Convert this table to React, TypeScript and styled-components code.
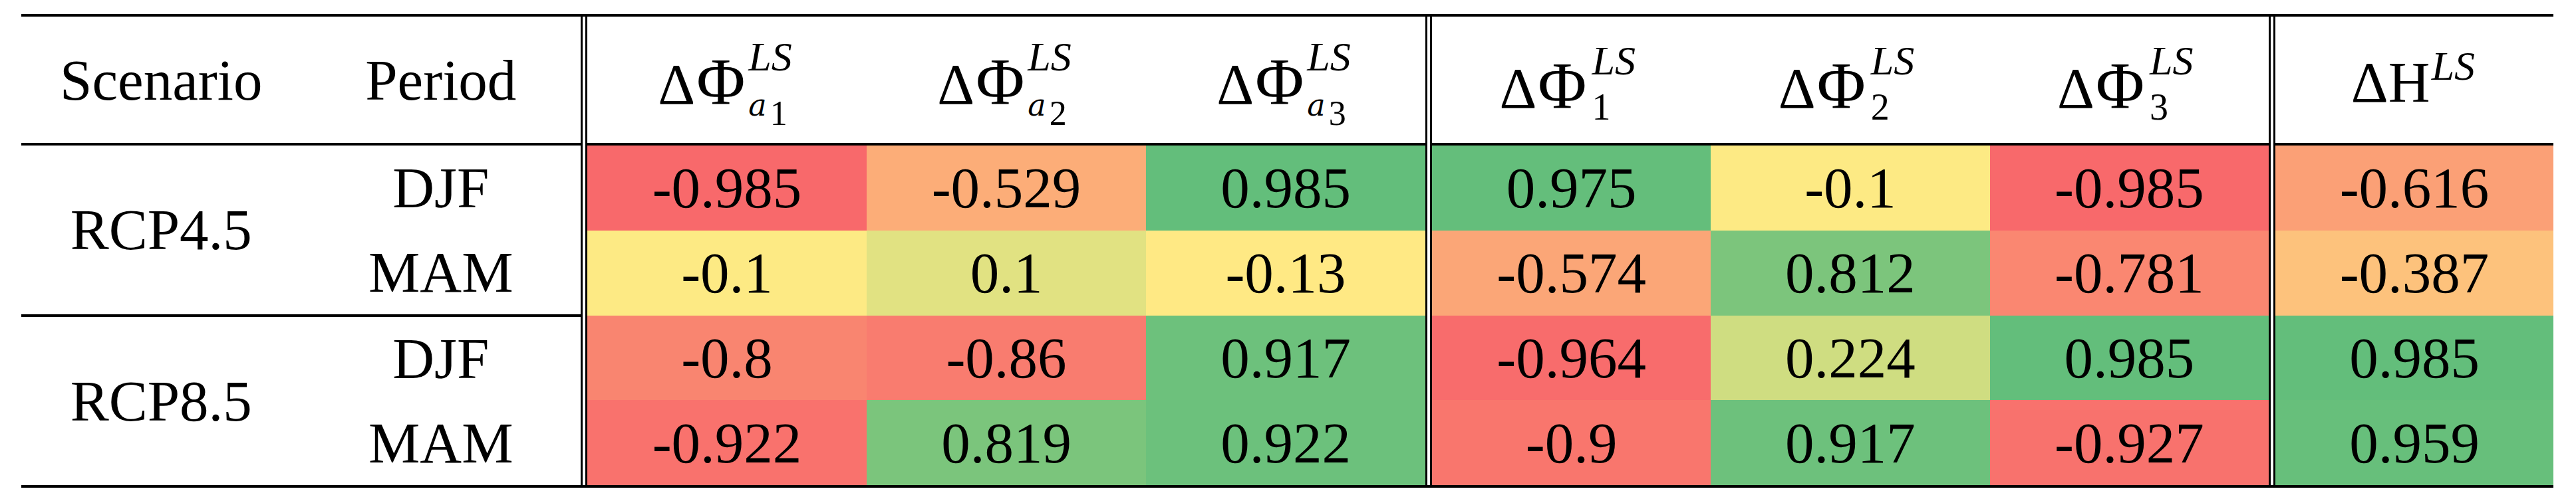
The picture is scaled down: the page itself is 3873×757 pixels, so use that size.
import React from "react";
import styled, { createGlobalStyle } from "styled-components";

const GlobalStyle = createGlobalStyle`
  html, body {
    margin: 0;
    padding: 0;
    background: #fff;
  }
  body {
    font-family: "Liberation Serif", "Times New Roman", serif;
    color: #000;
  }
`;

const Page = styled.div`
  padding: 21px 0 0 32px;
`;

const Table = styled.div`
  display: inline-flex;
  border-top: 4px solid #000;
  border-bottom: 4px solid #000;
  font-size: 87px;
  line-height: 1;
`;

const Section = styled.div<{ $width: number }>`
  display: flex;
  flex-direction: column;
  width: ${(p) => p.$width}px;
`;

const HeadRow = styled.div<{ $cols: number }>`
  display: grid;
  grid-template-columns: repeat(${(p) => p.$cols}, 1fr);
  height: 190px;
`;

const HeadCell = styled.div`
  display: flex;
  align-items: center;
  justify-content: center;
  white-space: nowrap;
`;

const MathCell = styled.div<{ $pad: number }>`
  display: flex;
  align-items: flex-start;
  justify-content: center;
  box-sizing: border-box;
  padding-top: ${(p) => p.$pad}px;
  white-space: nowrap;
`;

const Rule = styled.div`
  height: 4px;
  background: #000;
`;

const Divider = styled.div`
  box-sizing: border-box;
  width: 10px;
  border-left: 3px solid #000;
  border-right: 3px solid #000;
`;

const ScenarioBlock = styled.div`
  flex: 1;
  display: grid;
  grid-template-columns: 1fr 1fr;
  grid-template-rows: 1fr 1fr;
`;

const ScenarioCell = styled.div`
  grid-row: span 2;
  display: flex;
  align-items: center;
  justify-content: center;
`;

const PeriodCell = styled.div`
  display: flex;
  align-items: center;
  justify-content: center;
`;

const DataBody = styled.div<{ $cols: number }>`
  display: grid;
  grid-template-columns: repeat(${(p) => p.$cols}, 1fr);
  grid-template-rows: repeat(4, 1fr);
  height: 511px;
`;

const ValueCell = styled.div<{ $bg: string }>`
  display: flex;
  align-items: center;
  justify-content: center;
  background: ${(p) => p.$bg};
`;

const MathLine = styled.span<{ $shift: number }>`
  display: block;
  white-space: nowrap;
  line-height: 1;
  margin-right: ${(p) => p.$shift}px;
`;

// cambria's phi is taller and wider than the serif one
const BigGlyph = styled.span`
  font-size: 100px;
  margin-left: 2px;
`;

const Scripts = styled.span<{ $raise: number; $space: number }>`
  display: inline-flex;
  flex-direction: column;
  align-items: flex-start;
  vertical-align: ${(p) => p.$raise}px;
  margin-left: ${(p) => p.$space}px;
`;

const Sup = styled.span`
  display: block;
  font-size: 62px;
  font-style: italic;
  line-height: 1;
`;

const Sub = styled.span<{ $gap: number; $size: number }>`
  display: block;
  margin-top: ${(p) => p.$gap}px;
  font-size: ${(p) => p.$size}px;
  line-height: 1;
`;

const Var = styled.span`
  font-family: "DejaVu Serif", "Liberation Serif", serif;
  font-size: 46px;
  font-style: italic;
`;

const Lower = styled.span`
  vertical-align: -14px;
  margin-left: 5px;
`;

type Row = { scenario: string; period: string; values: number[] };

const rows: Row[] = [
  { scenario: "RCP4.5", period: "DJF", values: [-0.985, -0.529, 0.985, 0.975, -0.1, -0.985, -0.616] },
  { scenario: "RCP4.5", period: "MAM", values: [-0.1, 0.1, -0.13, -0.574, 0.812, -0.781, -0.387] },
  { scenario: "RCP8.5", period: "DJF", values: [-0.8, -0.86, 0.917, -0.964, 0.224, 0.985, 0.985] },
  { scenario: "RCP8.5", period: "MAM", values: [-0.922, 0.819, 0.922, -0.9, 0.917, -0.927, 0.959] },
];

// excel style red - yellow - green scale, midpoint at the 50th percentile
const RED = [248, 105, 107];
const YELLOW = [255, 235, 132];
const GREEN = [99, 190, 123];

const sorted = rows.flatMap((r) => r.values).sort((a, b) => a - b);
const lo = sorted[0];
const hi = sorted[sorted.length - 1];
const half = sorted.length / 2;
const mid = sorted.length % 2 ? sorted[Math.floor(half)] : (sorted[half - 1] + sorted[half]) / 2;

function mix(a: number[], b: number[], t: number) {
  const c = a.map((v, i) => Math.round(v + (b[i] - v) * t));
  return `rgb(${c[0]}, ${c[1]}, ${c[2]})`;
}

function scaleColor(v: number) {
  if (v <= mid) return mix(RED, YELLOW, (v - lo) / (mid - lo));
  return mix(YELLOW, GREEN, (v - mid) / (hi - mid));
}

type Head = {
  base: string;
  big: string;
  sub?: React.ReactNode;
  raise: number;
  pad: number;
  space: number;
  shift: number;
  gap?: number;
  subSize?: number;
};

const groups: { width: number; cols: number[]; heads: Head[] }[] = [
  {
    width: 1260,
    cols: [0, 1, 2],
    heads: [1, 2, 3].map((n) => ({
      base: "Δ",
      big: "Φ",
      raise: 50,
      pad: 29,
      space: 5,
      shift: 6,
      gap: 15,
      subSize: 52,
      sub: (
        <>
          <Var>a</Var>
          <Lower>{n}</Lower>
        </>
      ),
    })),
  },
  {
    width: 1258,
    cols: [3, 4, 5],
    heads: [1, 2, 3].map((n) => ({
      base: "Δ",
      big: "Φ",
      raise: 50,
      pad: 35,
      space: 8,
      shift: 12,
      gap: 11,
      subSize: 56,
      sub: String(n),
    })),
  },
  {
    width: 418,
    cols: [6],
    heads: [{ base: "ΔH", big: "", raise: 33, pad: 43, space: 2, shift: 4 }],
  },
];

function MathHead({ head }: { head: Head }) {
  return (
    <MathLine $shift={head.shift}>
      {head.base}
      {head.big && <BigGlyph>{head.big}</BigGlyph>}
      <Scripts $raise={head.raise} $space={head.space}>
        <Sup>LS</Sup>
        {head.sub && (
          <Sub $gap={head.gap ?? 0} $size={head.subSize ?? 56}>
            {head.sub}
          </Sub>
        )}
      </Scripts>
    </MathLine>
  );
}

export default function App() {
  const scenarios = ["RCP4.5", "RCP8.5"];
  return (
    <Page>
      <GlobalStyle />
      <Table>
        <Section $width={841}>
          <HeadRow $cols={2}>
            <HeadCell>Scenario</HeadCell>
            <HeadCell>Period</HeadCell>
          </HeadRow>
          {scenarios.map((s) => (
            <React.Fragment key={s}>
              <Rule />
              <ScenarioBlock>
                <ScenarioCell>{s}</ScenarioCell>
                {rows
                  .filter((r) => r.scenario === s)
                  .map((r) => (
                    <PeriodCell key={r.period}>{r.period}</PeriodCell>
                  ))}
              </ScenarioBlock>
            </React.Fragment>
          ))}
        </Section>
        {groups.map((g, gi) => (
          <React.Fragment key={gi}>
            <Divider />
            <Section $width={g.width}>
              <HeadRow $cols={g.cols.length}>
                {g.heads.map((h, hi) => (
                  <MathCell key={hi} $pad={h.pad}>
                    <MathHead head={h} />
                  </MathCell>
                ))}
              </HeadRow>
              <Rule />
              <DataBody $cols={g.cols.length}>
                {rows.map((r, ri) =>
                  g.cols.map((c) => (
                    <ValueCell key={`${ri}-${c}`} $bg={scaleColor(r.values[c])}>
                      {String(r.values[c])}
                    </ValueCell>
                  ))
                )}
              </DataBody>
            </Section>
          </React.Fragment>
        ))}
      </Table>
    </Page>
  );
}
